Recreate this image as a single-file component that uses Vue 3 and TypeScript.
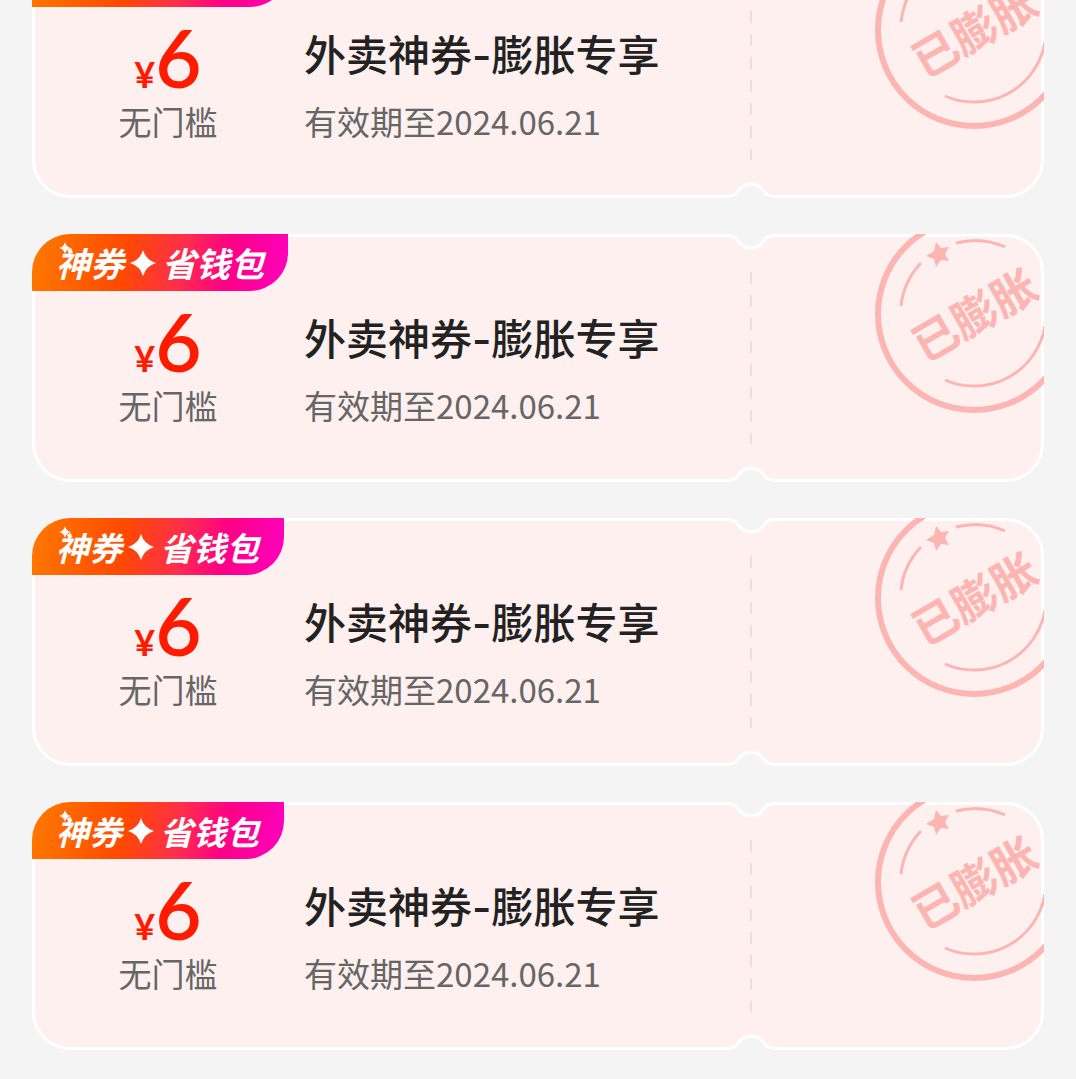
<script setup lang="ts">
interface Coupon {
  id: number
  amount: number
  threshold: string
  title: string
  expires: string
  compactTag: boolean
}

const coupons: Coupon[] = [false, false, true, true].map((compactTag, id) => ({
  id,
  amount: 6,
  threshold: '无门槛',
  title: '外卖神券-膨胀专享',
  expires: '2024.06.21',
  compactTag,
}))
</script>

<template>
  <main class="page">
    <ul class="list">
      <li v-for="c in coupons" :key="c.id" class="card">
        <div class="tag" :class="{ compact: c.compactTag }">
          <span>神券</span>
          <svg class="spark" viewBox="0 0 26 26" aria-hidden="true">
            <path d="M13 0Q16 10 26 13Q16 16 13 26Q10 16 0 13Q10 10 13 0Z" />
          </svg>
          <span>省钱包</span>
          <svg class="twinkle" viewBox="0 0 12 12" aria-hidden="true">
            <path d="M6 0Q7 5 12 6Q7 7 6 12Q5 7 0 6Q5 5 6 0Z" />
          </svg>
        </div>

        <div class="body">
          <div class="value">
            <p class="price"><span class="yen">¥</span><span class="num">{{ c.amount }}</span></p>
            <p class="note">{{ c.threshold }}</p>
          </div>
          <div class="info">
            <h2 class="title">{{ c.title }}</h2>
            <p class="note">有效期至<time>{{ c.expires }}</time></p>
          </div>
        </div>

        <div class="divider">
          <svg class="notch" viewBox="0 0 44 18" aria-hidden="true">
            <path class="gap" d="M0 0V1C6 1 7 4 9 7C13 12 17 14 22 14C27 14 31 12 35 7C37 4 38 1 44 1V0Z" />
            <path class="rim" d="M0 2C6 2 7 4 9 7C13 12 17 14 22 14C27 14 31 12 35 7C37 4 38 2 44 2" />
          </svg>
          <span class="dashes"></span>
          <svg class="notch flip" viewBox="0 0 44 18" aria-hidden="true">
            <path class="gap" d="M0 0V1C6 1 7 4 9 7C13 12 17 14 22 14C27 14 31 12 35 7C37 4 38 1 44 1V0Z" />
            <path class="rim" d="M0 2C6 2 7 4 9 7C13 12 17 14 22 14C27 14 31 12 35 7C37 4 38 2 44 2" />
          </svg>
        </div>

        <svg class="stamp" viewBox="0 0 200 200" role="img" aria-label="已膨胀">
          <circle cx="100" cy="100" r="96" stroke-width="6" />
          <path stroke-width="3" d="M27 92A73 73 0 0 1 47 49M82 29A73 73 0 0 1 131 33M71 166A72 72 0 0 0 171 112" />
          <path class="fill" d="M62 28L67 34L75 33L71 40L75 47L67 46L62 53L60 45L52 42L60 37Z" />
          <text class="fill" x="100" y="118" text-anchor="middle" transform="rotate(-30 100 100)">已膨胀</text>
        </svg>
      </li>
    </ul>
  </main>
</template>

<style>
body {
  margin: 0;
  background: #f4f4f4;
}
</style>

<style scoped>
.page {
  overflow: hidden;
  padding: 0 32px 28px;
  font-family: "Noto Sans CJK SC", sans-serif;
}

.list {
  display: flex;
  flex-direction: column;
  gap: 36px;
  margin: -50px 0 0;
  padding: 0;
  list-style: none;
}

.card {
  position: relative;
  display: flex;
  flex-direction: column;
  height: 248px;
  overflow: hidden;
  border-radius: 38px;
  background: #fff0f0;
  box-shadow: inset 0 0 0 3px #fff;
}

.tag {
  position: relative;
  display: flex;
  align-items: center;
  align-self: flex-start;
  gap: 6px;
  box-sizing: border-box;
  width: 256px;
  height: 57px;
  padding: 0 0 0 24px;
  border-radius: 0 0 38px 0;
  background: linear-gradient(100deg, #ff7a00 0%, #ff4a00 36%, #ff2e4a 58%, #ff0086 76%, #ff00c0 100%);
  color: #fff;
  font-size: 34px;
  font-weight: 700;
  font-style: italic;
  line-height: 56px;
  white-space: nowrap;
}

.tag.compact {
  width: 252px;
  font-size: 33px;
}

.spark {
  width: 26px;
  height: 26px;
  fill: #fff;
}

.twinkle {
  position: absolute;
  top: 8px;
  left: 27px;
  width: 12px;
  height: 12px;
  fill: #fff;
}

.body {
  display: flex;
}

.value {
  width: 272px;
  text-align: center;
}

.price,
.note,
.title {
  margin: 0;
}

.price {
  height: 90px;
  color: #ff1a00;
  font-family: Lato, sans-serif;
  line-height: 100px;
}

.yen {
  font-size: 36px;
  font-weight: 700;
}

.num {
  font-size: 80px;
  font-weight: 600;
}

.note {
  color: #666;
  font-size: 33px;
  line-height: 48px;
}

.title {
  height: 90px;
  color: #222;
  font-family: Inter, "Noto Sans CJK SC", sans-serif;
  font-size: 42px;
  font-weight: 500;
  line-height: 98px;
}

.divider {
  position: absolute;
  top: 0;
  right: 271px;
  bottom: 0;
  display: flex;
  flex-direction: column;
  align-items: center;
  gap: 20px;
}

.notch {
  width: 44px;
  height: 18px;
}

.notch .gap {
  fill: #f4f4f4;
}

.notch .rim {
  fill: none;
  stroke: #fff;
  stroke-width: 3px;
}

.flip {
  transform: scaleY(-1);
}

.dashes {
  flex: 1;
  width: 2px;
  background: repeating-linear-gradient(#f5d9dc 0 12px, transparent 12px 23px);
}

.stamp {
  position: absolute;
  top: -20px;
  right: -30px;
  width: 200px;
  height: 200px;
  fill: none;
  stroke: #fdb5b1;
}

.stamp .fill {
  fill: #fdb5b1;
  stroke: none;
}

.stamp text {
  font-size: 45px;
  font-weight: 700;
}
</style>
